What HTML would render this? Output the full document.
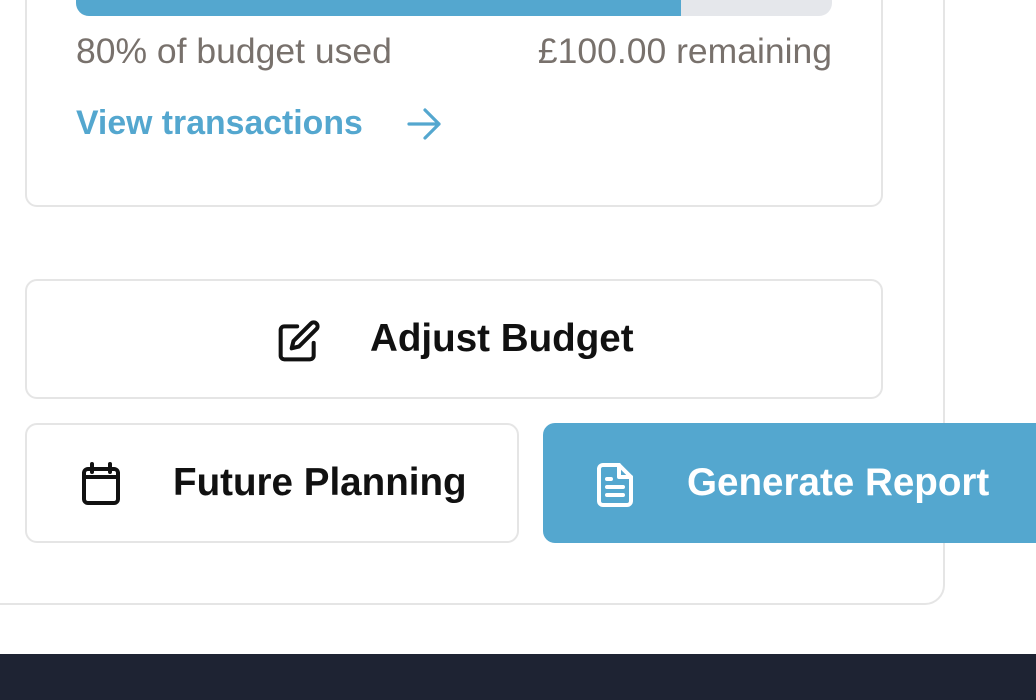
<!DOCTYPE html>
<html><head><style>
*{margin:0;padding:0;box-sizing:border-box}
body{width:1036px;height:700px;overflow:hidden;background:#fff;font-family:"Liberation Sans",sans-serif;position:relative}
.outer{position:absolute;left:-30px;top:-40px;width:975px;height:645px;border:2px solid #e5e5e5;border-radius:20px;background:#fff}
.inner{position:absolute;left:25px;top:-40px;width:858px;height:247px;border:2px solid #e5e5e5;border-radius:12px;background:#fff}
.bar{position:absolute;left:76px;top:-10px;width:756px;height:26px;background:#e5e7eb;border-radius:0 0 13px 13px;overflow:hidden}
.bar div{width:605px;height:100%;background:#54a7cf}
.t{position:absolute;font-size:35.5px;color:#78716c;top:30px;line-height:42px}
.link{position:absolute;left:76px;top:102px;font-size:33.8px;line-height:42px;color:#54a7cf;font-weight:bold}
.btn{position:absolute;border:2px solid #e5e5e5;border-radius:12px;background:#fff;font-size:38.6px;font-weight:bold;color:#111;display:flex;align-items:center}
.btn span{position:absolute}
.footer{position:absolute;left:0;top:654px;width:1036px;height:46px;background:#1e2333}
</style></head><body>
<div class="outer"></div>
<div class="inner"></div>
<div class="bar"><div></div></div>
<div class="t" style="left:76px">80% of budget used</div>
<div class="t" style="right:204px">£100.00 remaining</div>
<div class="link">View transactions</div>
<svg style="position:absolute;left:405px;top:106px" width="38" height="36" viewBox="0 0 38 36" fill="none" stroke="#54a7cf" stroke-width="3.2" stroke-linecap="round" stroke-linejoin="round"><path d="M4 18H34M20 4L34 18L20 32"/></svg>

<div class="btn" style="left:25px;top:279px;width:858px;height:120px">
<svg style="position:absolute;left:250px;top:38px" width="44" height="44" viewBox="0 0 24 24" fill="none" stroke="#111" stroke-width="2.2" stroke-linecap="round" stroke-linejoin="round"><path d="M11 4H4a2 2 0 0 0-2 2v14a2 2 0 0 0 2 2h14a2 2 0 0 0 2-2v-7"/><path d="M18.5 2.5a2.1 2.1 0 0 1 3 3L12 15l-4 1 1-4z"/></svg>
<span style="left:343px">Adjust Budget</span></div>

<div class="btn" style="left:25px;top:423px;width:494px;height:120px">
<svg style="position:absolute;left:53px;top:36px" width="42" height="46" viewBox="0 0 21 23" fill="none" stroke="#111" stroke-width="2" stroke-linecap="round"><rect x="2" y="4" width="17" height="17" rx="2"/><path d="M6 1.5v4M15 1.5v4M2 8h17"/></svg>
<span style="left:146px">Future Planning</span></div>

<div class="btn" style="left:543px;top:423px;width:520px;height:120px;background:#54a7cf;border-color:#54a7cf;color:#fff">
<svg style="position:absolute;left:50px;top:36px" width="40" height="48" viewBox="0 0 20 24" fill="none" stroke="#fff" stroke-width="2" stroke-linecap="round" stroke-linejoin="round"><path d="M12 2H4a2 2 0 0 0-2 2v16a2 2 0 0 0 2 2h12a2 2 0 0 0 2-2V8z"/><path d="M12 2v6h6M6 13h8M6 17h8M6 9h2"/></svg>
<span style="left:142px">Generate Report</span></div>

<div class="footer"></div>
</body></html>
